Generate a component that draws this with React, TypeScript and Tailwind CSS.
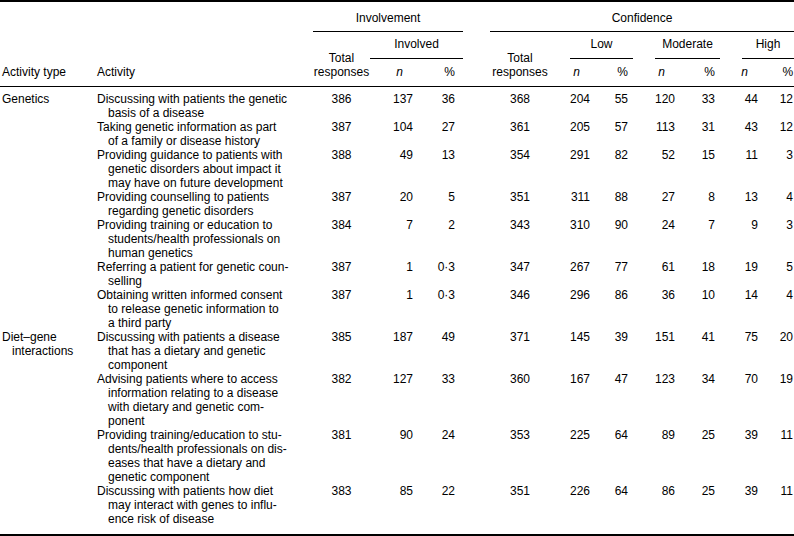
import React from 'react';

type Row = { type?: string[]; activity: string[]; v: string[] };

const rows: Row[] = [
    {
        type: ['Genetics'],
        activity: ['Discussing with patients the genetic', 'basis of a disease'],
        v: ['386', '137', '36', '368', '204', '55', '120', '33', '44', '12'],
    },
    {
        activity: ['Taking genetic information as part', 'of a family or disease history'],
        v: ['387', '104', '27', '361', '205', '57', '113', '31', '43', '12'],
    },
    {
        activity: ['Providing guidance to patients with', 'genetic disorders about impact it', 'may have on future development'],
        v: ['388', '49', '13', '354', '291', '82', '52', '15', '11', '3'],
    },
    {
        activity: ['Providing counselling to patients', 'regarding genetic disorders'],
        v: ['387', '20', '5', '351', '311', '88', '27', '8', '13', '4'],
    },
    {
        activity: ['Providing training or education to', 'students/health professionals on', 'human genetics'],
        v: ['384', '7', '2', '343', '310', '90', '24', '7', '9', '3'],
    },
    {
        activity: ['Referring a patient for genetic coun-', 'selling'],
        v: ['387', '1', '0·3', '347', '267', '77', '61', '18', '19', '5'],
    },
    {
        activity: ['Obtaining written informed consent', 'to release genetic information to', 'a third party'],
        v: ['387', '1', '0·3', '346', '296', '86', '36', '10', '14', '4'],
    },
    {
        type: ['Diet\u2013gene', 'interactions'],
        activity: ['Discussing with patients a disease', 'that has a dietary and genetic', 'component'],
        v: ['385', '187', '49', '371', '145', '39', '151', '41', '75', '20'],
    },
    {
        activity: ['Advising patients where to access', 'information relating to a disease', 'with dietary and genetic com-', 'ponent'],
        v: ['382', '127', '33', '360', '167', '47', '123', '34', '70', '19'],
    },
    {
        activity: ['Providing training/education to stu-', 'dents/health professionals on dis-', 'eases that have a dietary and', 'genetic component'],
        v: ['381', '90', '24', '353', '225', '64', '89', '25', '39', '11'],
    },
    {
        activity: ['Discussing with patients how diet', 'may interact with genes to influ-', 'ence risk of disease'],
        v: ['383', '85', '22', '351', '226', '64', '86', '25', '39', '11'],
    },
];

// one class per numeric column, in order
const numCls = [
    'text-center',
    'text-right pr-[5px]',
    'text-right pr-[20px]',
    'text-center',
    'text-right pr-[5px]',
    'text-right pr-[5px]',
    'text-right pr-[5px]',
    'text-right pr-[5px]',
    'text-right pr-[5px]',
    'text-right pr-[1px]',
];

const Lines = ({ lines }: { lines: string[] }) => (
    <>
        {lines.map((l, i) => (
            <React.Fragment key={i}>
                {i > 0 && <br />}
                {l}
            </React.Fragment>
        ))}
    </>
);

const App = () => {
    return (
        <div className="w-[794px] h-[536px] bg-white text-black font-['Liberation_Sans',Arial,sans-serif] text-[12px] leading-[14px]">
            <div className="border-t-2 border-b-2 border-black">
                <table className="table-fixed border-separate border-spacing-0 w-[794px]">
                    <colgroup>
                        <col className="w-[97px]" />
                        <col className="w-[216px]" />
                        <col className="w-[57px]" />
                        <col className="w-[48px]" />
                        <col className="w-[57px]" />
                        <col className="w-[90px]" />
                        <col className="w-[30px]" />
                        <col className="w-[38px]" />
                        <col className="w-[47px]" />
                        <col className="w-[40px]" />
                        <col className="w-[43px]" />
                        <col className="w-[31px]" />
                    </colgroup>
                    <thead>
                        <tr>
                            <th rowSpan={3} className="font-normal text-left align-bottom pl-[2px] pb-[7px] border-b border-black whitespace-nowrap">
                                Activity type
                            </th>
                            <th rowSpan={3} className="font-normal text-left align-bottom pb-[7px] border-b border-black">
                                Activity
                            </th>
                            <th colSpan={3} className="font-normal p-0 align-bottom">
                                <div className="pt-[9px] pb-[6px] mr-[12px] border-b border-black text-center">Involvement</div>
                            </th>
                            <th colSpan={7} className="font-normal p-0 align-bottom">
                                <div className="pt-[9px] pb-[6px] ml-[15px] border-b border-black text-center">Confidence</div>
                            </th>
                        </tr>
                        <tr>
                            <th rowSpan={2} className="font-normal text-center align-bottom pb-[7px] border-b border-black whitespace-nowrap">
                                Total<br />responses
                            </th>
                            <th colSpan={2} className="font-normal p-0 align-bottom">
                                <div className="pt-[5px] pb-[7px] mr-[12px] border-b border-black text-center">Involved</div>
                            </th>
                            <th rowSpan={2} className="font-normal text-center align-bottom pb-[7px] border-b border-black whitespace-nowrap">
                                Total<br />responses
                            </th>
                            <th colSpan={2} className="font-normal p-0 align-bottom">
                                <div className="pt-[5px] pb-[7px] ml-[5px] border-b border-black text-center">Low</div>
                            </th>
                            <th colSpan={2} className="font-normal p-0 align-bottom">
                                <div className="pt-[5px] pb-[7px] ml-[22px] border-b border-black text-center">Moderate</div>
                            </th>
                            <th colSpan={2} className="font-normal p-0 align-bottom">
                                <div className="pt-[5px] pb-[7px] ml-[22px] border-b border-black text-center">High</div>
                            </th>
                        </tr>
                        <tr>
                            <th className="font-normal italic text-right pr-[15px] pt-[6px] pb-[7px] border-b border-black">n</th>
                            <th className="font-normal text-right pr-[20px] pt-[6px] pb-[7px] border-b border-black">%</th>
                            <th className="font-normal italic text-right pr-[15px] pt-[6px] pb-[7px] border-b border-black">n</th>
                            <th className="font-normal text-right pr-[5px] pt-[6px] pb-[7px] border-b border-black">%</th>
                            <th className="font-normal italic text-right pr-[15px] pt-[6px] pb-[7px] border-b border-black">n</th>
                            <th className="font-normal text-right pr-[5px] pt-[6px] pb-[7px] border-b border-black">%</th>
                            <th className="font-normal italic text-right pr-[15px] pt-[6px] pb-[7px] border-b border-black">n</th>
                            <th className="font-normal text-right pr-[1px] pt-[6px] pb-[7px] border-b border-black">%</th>
                        </tr>
                    </thead>
                    <tbody>
                        <tr className="h-[5px]">
                            <td colSpan={12} className="p-0"></td>
                        </tr>
                        {rows.map((r, i) => (
                            <tr key={i} className="align-top">
                                <td className="pl-[12px] -indent-[10px] whitespace-nowrap">
                                    {r.type && <Lines lines={r.type} />}
                                </td>
                                <td className="pl-[11px] -indent-[11px] whitespace-nowrap">
                                    <Lines lines={r.activity} />
                                </td>
                                {r.v.map((v, j) => (
                                    <td key={j} className={numCls[j] + ' whitespace-nowrap'}>
                                        {v}
                                    </td>
                                ))}
                            </tr>
                        ))}
                        <tr className="h-[8px]">
                            <td colSpan={12} className="p-0"></td>
                        </tr>
                    </tbody>
                </table>
            </div>
        </div>
    );
};

export default App;
